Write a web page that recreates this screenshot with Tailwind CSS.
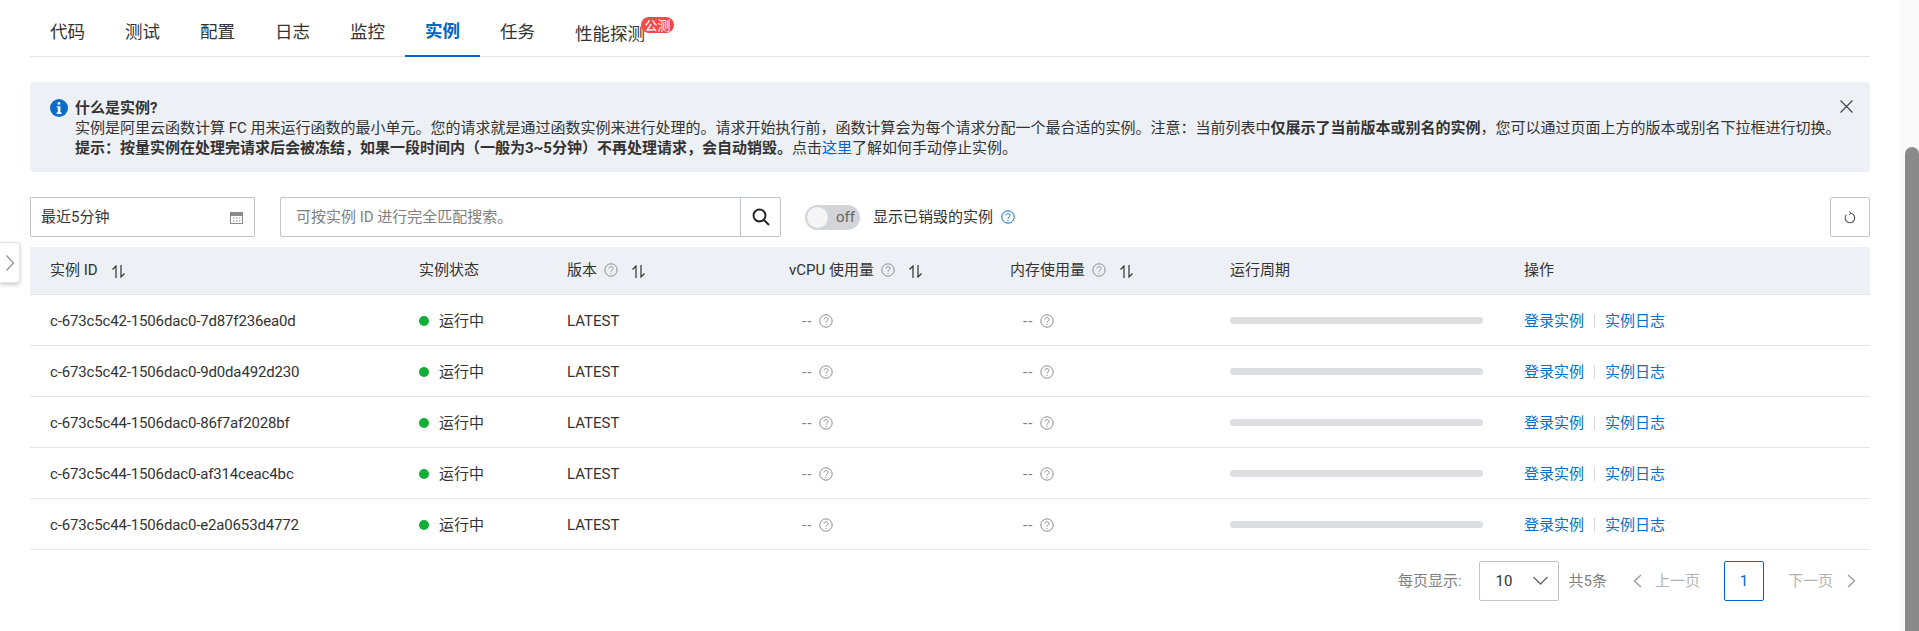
<!DOCTYPE html>
<html lang="zh-CN">
<head>
    <meta charset="UTF-8">
    <title>实例</title>
    <script src="https://cdn.jsdelivr.net/npm/@tailwindcss/browser@4"></script>
</head>
<body class="h-[631px] overflow-hidden bg-white text-[15px] leading-5 text-[#333] font-['Roboto','Noto_Sans_CJK_SC',sans-serif]">
<div class="flex h-[631px]">
    <main class="relative w-[1900px] shrink-0 px-[30px]">
        <!-- side handle -->
        <div class="absolute left-0 top-[242px] flex h-[41px] w-5 items-center justify-center rounded-r-sm border border-l-0 border-[#e3e3e3] bg-white shadow-[0_2px_4px_rgba(0,0,0,0.2)]">
            <svg width="10" height="18" viewBox="0 0 10 18" fill="none" stroke="#999" stroke-width="1.4"><path d="M1.5 1.5 8.5 9l-7 7.5"/></svg>
        </div>

        <!-- tabs -->
        <nav class="flex h-[57px] border-b border-[#e3e4e6] text-[17.5px]">
            <a class="flex h-[57px] w-[75px] shrink-0 items-center justify-center pt-[6px]">代码</a>
            <a class="flex h-[57px] w-[75px] shrink-0 items-center justify-center pt-[6px]">测试</a>
            <a class="flex h-[57px] w-[75px] shrink-0 items-center justify-center pt-[6px]">配置</a>
            <a class="flex h-[57px] w-[75px] shrink-0 items-center justify-center pt-[6px]">日志</a>
            <a class="flex h-[57px] w-[75px] shrink-0 items-center justify-center pt-[6px]">监控</a>
            <a class="flex h-[57px] w-[75px] shrink-0 items-center justify-center border-b-2 border-[#0064c8] pt-[6px] font-bold text-[#0064c8]">实例</a>
            <a class="flex h-[57px] w-[75px] shrink-0 items-center justify-center pt-[6px]">任务</a>
            <a class="relative flex h-[57px] w-[110px] shrink-0 items-center pl-5 pt-[10px]">性能探测
                <span class="absolute left-[86px] top-[17px] flex h-4 w-[33px] items-center justify-center rounded-full bg-[#f2494b] text-[13px] leading-none text-white">公测</span>
            </a>
        </nav>

        <!-- notice -->
        <section class="relative mt-[25px] h-[90px] rounded-sm bg-[#edf0f5] pl-[45px] pt-4">
            <svg class="absolute left-5 top-[17px]" width="18" height="18" viewBox="0 0 18 18"><circle cx="9" cy="9" r="9" fill="#0a6bc8"/><rect x="7.6" y="3" width="2.8" height="2.8" rx="1.4" fill="#fff"/><path d="M6.8 7.2h3.6v6.4h1.2v1.4H6.6v-1.4h1.2V8.6h-1z" fill="#fff"/></svg>
            <svg class="absolute left-[1810px] top-[18px]" width="13" height="13" viewBox="0 0 13 13" fill="none" stroke="#444" stroke-width="1.2"><path d="M.5.5l12 12M12.5.5l-12 12"/></svg>
            <p class="font-bold">什么是实例?</p>
            <p>实例是阿里云函数计算 FC 用来运行函数的最小单元。您的请求就是通过函数实例来进行处理的。请求开始执行前，函数计算会为每个请求分配一个最合适的实例。注意：当前列表中<b>仅展示了当前版本或别名的实例</b>，您可以通过页面上方的版本或别名下拉框进行切换。</p>
            <p><b>提示：按量实例在处理完请求后会被冻结，如果一段时间内（一般为3~5分钟）不再处理请求，会自动销毁。</b>点击<a class="text-[#0064c8]">这里</a>了解如何手动停止实例。</p>
        </section>

        <!-- toolbar -->
        <div class="mt-[25px] flex h-10 items-center">
            <div class="flex h-10 w-[225px] items-center justify-between rounded-[1px] border border-[#c1c4c9] pl-[10px] pr-[11px]">
                <span>最近5分钟</span>
                <svg width="13" height="13" viewBox="0 0 13 13" fill="none" stroke="#8a8a8a"><rect x=".5" y="1.5" width="12" height="11"/><path d="M.5 3.500h12" stroke-width="3"/><path d="M3 7h1.500M6 7h1.500M9 7h1.500M3 10h1.500M6 10h1.500M9 10h1.500"/></svg>
            </div>
            <div class="ml-[25px] flex h-10 w-[501px] items-center rounded-[2px] border border-[#c1c4c9]">
                <span class="flex-1 pl-[15px] text-[#808080]">可按实例 ID 进行完全匹配搜索。</span>
                <span class="flex h-full w-10 items-center justify-center border-l border-[#c1c4c9]">
                    <svg width="18" height="18" viewBox="0 0 18 18" fill="none" stroke="#222" stroke-width="1.9"><circle cx="7.5" cy="7.5" r="6"/><path d="M12 12l5 5"/></svg>
                </span>
            </div>
            <div class="relative ml-6 flex h-[25px] w-[55px] items-center justify-end rounded-full bg-[#d2d4d8] pr-[5px] text-[#666]">
                <span class="absolute left-[2px] top-[2px] h-[21px] w-[21px] rounded-full bg-[#f5f5f5]"></span>
                off
            </div>
            <span class="ml-[13px]">显示已销毁的实例</span>
            <svg class="ml-2" width="14" height="14" viewBox="0 0 14 14" fill="none" stroke="#0a6bc8"><circle cx="7" cy="7" r="6.2"/><path d="M5 5.500c0-2.600 4-2.600 4 0 0 1.500-2 1.600-2 3.200M7 10v1"/></svg>
            <button class="ml-auto flex h-10 w-10 items-center justify-center rounded-[2px] border border-[#c1c4c9]">
                <svg width="12" height="13" viewBox="0 0 12 13" fill="none" stroke="#555" stroke-width="1.1"><path d="M6.500 2.200A4.800 4.800 0 1 1 2.400 3.700"/><path d="M5 .5l2 1.700-2 1.700" stroke-width="1"/></svg>
            </button>
        </div>

        <!-- instances table -->
        <table class="mt-[10px] w-[1840px] table-fixed border-collapse text-left">
            <colgroup>
                <col class="w-[369px]"><col class="w-[148px]"><col class="w-[222px]"><col class="w-[221px]"><col class="w-[220px]"><col class="w-[294px]"><col class="w-[366px]">
            </colgroup>
            <thead class="bg-[#edf0f5]">
                <tr class="h-[47px] border-b border-[#e3e4e6]" id="headRow"></tr>
            </thead>
            <tbody id="rows"></tbody>
        </table>

        <!-- pagination -->
        <div class="mt-[11px] flex h-10 items-center justify-end pr-[14px] text-[#808080]">
            <span>每页显示:</span>
            <div class="ml-[17px] flex h-10 w-[80px] items-center justify-between rounded-[2px] border border-[#c1c4c9] pl-4 pr-[10px] text-[#333]">
                <span>10</span>
                <svg width="15" height="9" viewBox="0 0 15 9" fill="none" stroke="#666" stroke-width="1.3"><path d="M.5 1l7 7 7-7"/></svg>
            </div>
            <span class="ml-[10px]">共5条</span>
            <svg class="ml-[26px]" width="9" height="14" viewBox="0 0 9 14" fill="none" stroke="#999" stroke-width="1.3"><path d="M8 1 1.500 7 8 13"/></svg>
            <span class="ml-[13px] text-[#b3b3b3]">上一页</span>
            <span class="ml-6 flex h-10 w-10 items-center justify-center rounded-[2px] border border-[#0064c8] text-[#0064c8]">1</span>
            <span class="ml-6 text-[#b3b3b3]">下一页</span>
            <svg class="ml-[14px]" width="9" height="14" viewBox="0 0 9 14" fill="none" stroke="#999" stroke-width="1.3"><path d="M1 1l6.500 6L1 13"/></svg>
        </div>
    </main>

    <!-- scrollbar -->
    <div class="w-[19px] bg-[#fafafa] pl-[5px] pt-[147px]">
        <div class="h-full w-[14px] rounded-t-full bg-[#8a8a8a]"></div>
    </div>
</div>

<script>
    const help = '<svg class="shrink-0" width="14" height="14" viewBox="0 0 14 14" fill="none" stroke="#8c8c8c"><circle cx="7" cy="7" r="6.200"/><path d="M5 5.500c0-2.600 4-2.600 4 0 0 1.500-2 1.600-2 3.200M7 10v1"/></svg>';
    const sort = '<svg class="shrink-0" width="13" height="13" viewBox="0 0 13 13" fill="none" stroke="#333" stroke-width="1.2"><path d="M4 13V1L.5 4.500M9 0v12l3.500-3.500"/></svg>';

    const head = [
        ['实例 ID', false, true],
        ['实例状态', false, false],
        ['版本', true, true],
        ['vCPU 使用量', true, true],
        ['内存使用量', true, true],
        ['运行周期', false, false],
        ['操作', false, false],
    ];
    document.getElementById('headRow').innerHTML = head.map(([label, hasHelp, hasSort]) => `
        <th class="pl-5 font-normal">
            <div class="flex items-center">
                <span>${label}</span>
                ${hasHelp ? '<span class="ml-[7px]">' + help + '</span>' : ''}
                ${hasSort ? '<span class="ml-[14px] mt-[3px]">' + sort + '</span>' : ''}
            </div>
        </th>`).join('');

    const ids = [
        'c-673c5c42-1506dac0-7d87f236ea0d',
        'c-673c5c42-1506dac0-9d0da492d230',
        'c-673c5c44-1506dac0-86f7af2028bf',
        'c-673c5c44-1506dac0-af314ceac4bc',
        'c-673c5c44-1506dac0-e2a0653d4772',
    ];
    const usage = `<div class="flex items-center pl-[13px] text-[#808080]"><span class="tracking-[1px]">--</span><span class="ml-[7px]">${help}</span></div>`;
    document.getElementById('rows').innerHTML = ids.map(id => `
        <tr class="h-[51px] border-b border-[#e3e4e6]">
            <td class="pl-5 pt-[2px] tracking-[-0.15px]">${id}</td>
            <td class="pl-5 pt-[2px]"><div class="flex items-center"><span class="h-[10px] w-[10px] rounded-full bg-[#12ae35]"></span><span class="ml-[10px]">运行中</span></div></td>
            <td class="pl-5 pt-[2px]">LATEST</td>
            <td class="pl-5 pt-[2px]">${usage}</td>
            <td class="pl-5 pt-[2px]">${usage}</td>
            <td class="pl-5 pt-[2px]"><div class="h-[7px] w-[253px] rounded-full bg-[#dcdee2]"></div></td>
            <td class="pl-5 pt-[2px] text-[#0070cc]"><div class="flex items-center"><a>登录实例</a><span class="mx-[10px] h-[14px] w-px bg-[#d9d9d9]"></span><a>实例日志</a></div></td>
        </tr>`).join('');
</script>
</body>
</html>
